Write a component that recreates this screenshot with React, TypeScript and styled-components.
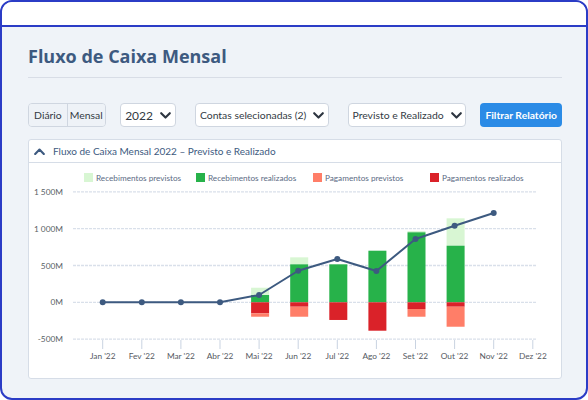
import React from 'react'
import styled, { createGlobalStyle } from 'styled-components'

const GlobalStyle = createGlobalStyle`
  * { box-sizing: border-box; }
  body {
    margin: 0;
    font-family: Lato, "Open Sans", sans-serif;
    background: #ffffff;
  }
`

const Frame = styled.div`
  width: 588px;
  height: 400px;
  border: 2px solid #2b3cc6;
  border-radius: 12px;
  overflow: hidden;
  background: #eff3f8;
  display: flex;
  flex-direction: column;
`

const TopBar = styled.div`
  height: 25px;
  flex: none;
  background: #ffffff;
  border-bottom: 2px solid #2b3cc6;
`

const Content = styled.div`
  padding: 0 24px 0 26px;
  display: flex;
  flex-direction: column;
`

const Title = styled.h1`
  margin: 17px 0 0;
  font-family: "Open Sans", sans-serif;
  font-size: 18px;
  line-height: 24px;
  font-weight: 700;
  color: #3d5a80;
`

const Rule = styled.div`
  margin-top: 9px;
  height: 1px;
  background: #d8dde6;
`

const Controls = styled.div`
  margin-top: 25px;
  display: flex;
  align-items: center;
  height: 24px;
`

const Segmented = styled.div`
  display: flex;
  height: 24px;
  border: 1px solid #cfd6e0;
  border-radius: 4px;
  overflow: hidden;
  margin-right: 14px;
`

const Segment = styled.button<{ $width: number }>`
  width: ${(p) => p.$width}px;
  border: none;
  padding: 0;
  background: #eef2f7;
  font-family: inherit;
  font-size: 10.4px;
  color: #333a44;
  white-space: nowrap;
  & + & {
    border-left: 1px solid #cfd6e0;
  }
`

const Select = styled.button<{ $width: number; $gap: number }>`
  width: ${(p) => p.$width}px;
  height: 24px;
  margin-right: ${(p) => p.$gap}px;
  border: 1px solid #cfd6e0;
  border-radius: 4px;
  background: #ffffff;
  display: flex;
  align-items: center;
  justify-content: center;
  gap: 7px;
  padding: 0;
  font-family: inherit;
  font-size: 10.4px;
  color: #333a44;
  white-space: nowrap;
`

const YearText = styled.span`
  font-size: 12px;
`

const PrimaryButton = styled.button`
  width: 82px;
  height: 24px;
  border: none;
  border-radius: 4px;
  background: #2b8be6;
  color: #ffffff;
  font-family: inherit;
  font-weight: 700;
  font-size: 10.3px;
  padding: 0;
  white-space: nowrap;
`

const Card = styled.div`
  margin-top: 12px;
  width: 534px;
  height: 240px;
  background: #ffffff;
  border: 1px solid #d6dde7;
  border-radius: 3px;
  display: flex;
  flex-direction: column;
`

const CardHeader = styled.div`
  height: 23px;
  flex: none;
  border-bottom: 1px solid #d6dde7;
  display: flex;
  align-items: center;
  gap: 8px;
  padding-left: 5px;
  font-size: 10px;
  color: #3d5a80;
  white-space: nowrap;
`

const ChartSvg = styled.svg`
  display: block;
`

const Chevron = ({ up = false }: { up?: boolean }) => (
  <svg width="11" height="7" viewBox="0 0 11 7">
    <path
      d={up ? 'M1.2 6 L5.5 1.5 L9.8 6' : 'M1.2 1.2 L5.5 5.6 L9.8 1.2'}
      fill="none"
      stroke={up ? '#3d5a80' : '#2d3540'}
      strokeWidth="2.1"
      strokeLinecap="round"
      strokeLinejoin="round"
    />
  </svg>
)

const months = ['Jan', 'Fev', 'Mar', 'Abr', 'Mai', 'Jun', 'Jul', 'Ago', 'Set', 'Out', 'Nov', 'Dez']

// values in M
const bars: Record<number, { recReal: number; recPrev: number; pagReal: number; pagPrev: number }> = {
  4: { recReal: 99, recPrev: 99, pagReal: 150, pagPrev: 46 },
  5: { recReal: 516, recPrev: 95, pagReal: 60, pagPrev: 136 },
  6: { recReal: 516, recPrev: 0, pagReal: 240, pagPrev: 0 },
  7: { recReal: 701, recPrev: 0, pagReal: 386, pagPrev: 0 },
  8: { recReal: 951, recPrev: 18, pagReal: 91, pagPrev: 105 },
  9: { recReal: 769, recPrev: 372, pagReal: 60, pagPrev: 272 },
}

const line = [0, 0, 0, 0, 99, 429, 588, 425, 860, 1041, 1213]

const ZERO = 302.3
const SCALE = 0.0736
const yOf = (v: number) => ZERO - v * SCALE
const xOf = (i: number) => 102.7 + i * 39.1
const BAR = 18

const legend = [
  { x: 84, color: '#d8f6d3', label: 'Recebimentos previstos' },
  { x: 196, color: '#27b24a', label: 'Recebimentos realizados' },
  { x: 313, color: '#ff7e68', label: 'Pagamentos previstos' },
  { x: 430, color: '#da2229', label: 'Pagamentos realizados' },
]

const ticks = [1500, 1000, 500, 0, -500]
const fmt = (v: number) =>
  Math.abs(v) >= 1000
    ? `${Math.trunc(v / 1000)} ${String(Math.abs(v) % 1000).padStart(3, '0')}M`
    : `${v}M`

const Chart = () => (
  <ChartSvg width={532} height={215} viewBox="29 163 532 215" fontFamily="Lato, sans-serif">
    {legend.map((l) => (
      <g key={l.label}>
        <rect x={l.x} y={173} width={9} height={9} fill={l.color} />
        <text x={l.x + 12} y={181} fontSize={8.2} fill="#5b6b84">
          {l.label}
        </text>
      </g>
    ))}
    {ticks.map((t) => (
      <g key={t}>
        <line x1={73} x2={536} y1={yOf(t)} y2={yOf(t)} stroke="#d9e0ea" strokeWidth={1.3} strokeDasharray="3 1" />
        <text x={63} y={yOf(t) + 3} fontSize={8.3} fill="#5a5f66" textAnchor="end">
          {fmt(t)}
        </text>
      </g>
    ))}
    {months.map((m, i) => (
      <g key={m}>
        <line x1={xOf(i)} x2={xOf(i)} y1={340} y2={349} stroke="#c9d3e1" strokeWidth={1} />
        <text x={xOf(i)} y={358.5} fontSize={8.3} fill="#55595f" textAnchor="middle">
          {m} '22
        </text>
      </g>
    ))}
    {Object.entries(bars).map(([k, b]) => {
      const x = xOf(Number(k)) - BAR / 2 + 1
      return (
        <g key={k}>
          {b.recPrev > 0 && (
            <rect x={x} y={yOf(b.recReal + b.recPrev)} width={BAR} height={b.recPrev * SCALE} fill="#d8f6d3" />
          )}
          <rect x={x} y={yOf(b.recReal)} width={BAR} height={b.recReal * SCALE} fill="#27b24a" />
          <rect x={x} y={ZERO} width={BAR} height={b.pagReal * SCALE} fill="#da2229" />
          {b.pagPrev > 0 && (
            <rect x={x} y={yOf(-b.pagReal)} width={BAR} height={b.pagPrev * SCALE} fill="#ff7e68" />
          )}
        </g>
      )
    })}
    <polyline
      points={line.map((v, i) => `${xOf(i)},${yOf(v)}`).join(' ')}
      fill="none"
      stroke="#3d5a80"
      strokeWidth={2}
      strokeLinejoin="round"
    />
    {line.map((v, i) => (
      <circle key={i} cx={xOf(i)} cy={yOf(v)} r={3} fill="#3d5a80" />
    ))}
  </ChartSvg>
)

export default function App() {
  return (
    <>
      <GlobalStyle />
      <Frame>
        <TopBar />
        <Content>
          <Title>Fluxo de Caixa Mensal</Title>
          <Rule />
          <Controls>
            <Segmented>
              <Segment $width={38}>Diário</Segment>
              <Segment $width={38}>Mensal</Segment>
            </Segmented>
            <Select $width={57} $gap={19}>
              <YearText>2022</YearText>
              <Chevron />
            </Select>
            <Select $width={134} $gap={19}>
              <span>Contas selecionadas (2)</span>
              <Chevron />
            </Select>
            <Select $width={119} $gap={14}>
              <span>Previsto e Realizado</span>
              <Chevron />
            </Select>
            <PrimaryButton>Filtrar Relatório</PrimaryButton>
          </Controls>
          <Card>
            <CardHeader>
              <Chevron up />
              <span>Fluxo de Caixa Mensal 2022 – Previsto e Realizado</span>
            </CardHeader>
            <Chart />
          </Card>
        </Content>
      </Frame>
    </>
  )
}
